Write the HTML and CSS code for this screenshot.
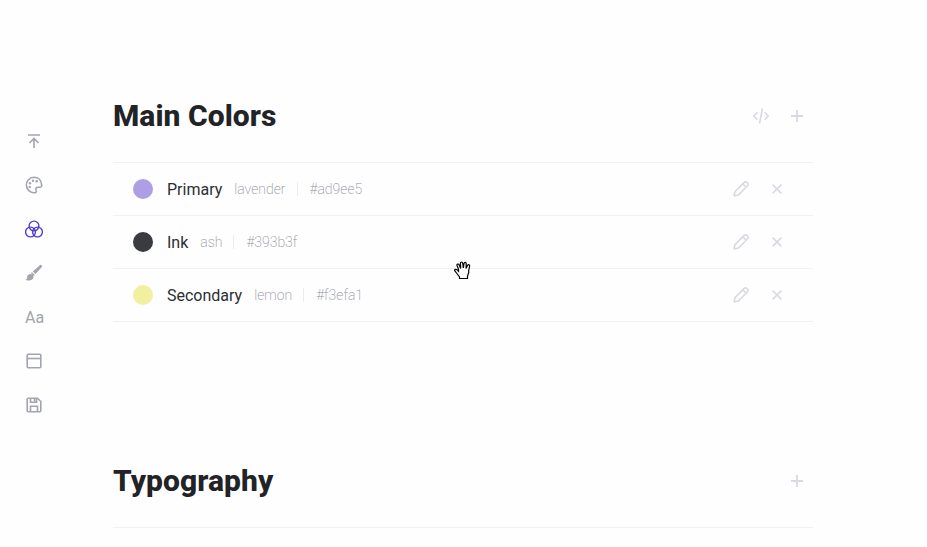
FILE: index.html
```
<!DOCTYPE html>
<html lang="en">
<head>
<meta charset="utf-8">
<title>Style guide</title>
<link rel="stylesheet" href="styles.css">
</head>
<body>
<svg class="defs" aria-hidden="true">
  <symbol id="code" viewBox="0 0 18 18"><path d="M5.400 5.200 1.800 9l3.600 3.800M12.600 5.200 16.200 9l-3.600 3.800M10.500 1.500 7.500 16.500"/></symbol>
  <symbol id="plus" viewBox="0 0 18 18"><path d="M9 3v12M3 9h12"/></symbol>
  <symbol id="close" viewBox="0 0 18 18"><path d="m4.600 4.600 8.800 8.800M13.400 4.600l-8.800 8.800"/></symbol>
  <symbol id="pencil" viewBox="0 0 18 18"><path d="M2 16 3 11.600 12.200 2.400a1.900 1.900 0 0 1 2.700 0l.7.7a1.900 1.900 0 0 1 0 2.700L6.400 15 2 16M10.800 3.900l3.300 3.300"/></symbol>
</svg>
<div class="page">
  <nav class="rail">
    <a><svg class="icon" viewBox="0 0 18 18"><path d="M3 3h12M9 16V6.500M4.500 11 9 6.500l4.500 4.500"/></svg></a>
    <a><svg class="icon" viewBox="0 0 18 18"><path d="M9 1.300a7.700 7.700 0 1 0 1.300 15.300c1.300-.3 1.300-1.500.8-2.300-.9-1.600.1-3 1.900-3h1.600c1.400 0 2.200-.8 2.100-2.200C16.400 4.400 13.200 1.300 9 1.300z"/><g class="dots"><circle cx="4.700" cy="10.900" r="1.200"/><circle cx="5" cy="7.200" r="1.200"/><circle cx="8" cy="4.800" r="1.200"/><circle cx="11.700" cy="5.200" r="1.200"/></g></svg></a>
    <a class="active"><svg class="icon" viewBox="0 0 18 18"><circle cx="9" cy="6" r="4.900"/><circle cx="5.500" cy="12" r="4.900"/><circle cx="12.500" cy="12" r="4.900"/></svg></a>
    <a><svg class="icon solid" viewBox="0 0 18 18"><path d="M15.100.9c.6-.6 2.500 1 2 1.800L10.500 10 7.800 7.600zM7 8.300l2.800 2.600-.9 1L6 9.200zM5.300 10c1.800 0 3.200 1.300 3.200 3 0 3.200-4.600 4.600-7.900 2.700 1.600-.3 1.300-1.300 1.500-2.700.2-1.800 1.500-3 3.200-3z"/></svg></a>
    <a class="type">Aa</a>
    <a><svg class="icon" viewBox="0 0 18 18"><rect x="2.200" y="2.200" width="13.600" height="13.600" rx="1"/><path d="M2.200 6.500h13.600"/></svg></a>
    <a><svg class="icon" viewBox="0 0 18 18"><path d="M3.200 2.200h9.300l3.300 3.300v9.300a1 1 0 0 1-1 1H3.200a1 1 0 0 1-1-1V3.200a1 1 0 0 1 1-1zM5.500 2.500v3.700h6V2.500M5.500 15.500v-5.300h7v5.300M9.500 3v2.200"/></svg></a>
  </nav>
  <main>
    <section class="colors">
      <header><h2>Main Colors</h2><div class="actions"><svg class="icon"><use href="#code"/></svg><svg class="icon thick"><use href="#plus"/></svg></div></header>
      <ul>
        <li><i class="swatch lavender"></i><b>Primary</b><span>lavender</span><span class="hex">#ad9ee5</span><div class="actions"><svg class="icon"><use href="#pencil"/></svg><svg class="icon"><use href="#close"/></svg></div></li>
        <li><i class="swatch ash"></i><b>Ink</b><span>ash</span><span class="hex">#393b3f</span><div class="actions"><svg class="icon"><use href="#pencil"/></svg><svg class="icon"><use href="#close"/></svg></div></li>
        <li><i class="swatch lemon"></i><b>Secondary</b><span>lemon</span><span class="hex">#f3efa1</span><div class="actions"><svg class="icon"><use href="#pencil"/></svg><svg class="icon"><use href="#close"/></svg></div></li>
      </ul>
    </section>
    <section>
      <header><h2>Typography</h2><div class="actions"><svg class="icon thick"><use href="#plus"/></svg></div></header>
      <ul></ul>
    </section>
  </main>
</div>
<svg class="hand" viewBox="0 0 18 19"><path d="M5.500 17.500V16L2.500 12 .7 9.700C.2 8.500 2 7.800 3 8.700l1.500 1.500V8L3 4.500C2.600 3 4.400 2.400 5.100 3.800L6.700 7.500 6.400 2.300C6.400.6 8.500.6 8.700 2.200L9.300 7l.7-4.500c.2-1.600 2.300-1.400 2.200.2L12 7.500l1.500-3c.7-1.400 2.400-.7 2.100.8l-.9 3.900v2.500l-1.200 3.300v2.500z"/></svg>
</body>
</html>
```
FILE: styles.css
```
* { box-sizing: border-box; }
body {
  margin: 0;
  height: 547px;
  overflow: hidden;
  background: #fefefe;
  color: #212326;
  font-family: Roboto, "Liberation Sans", sans-serif;
}
.defs { position: absolute; width: 0; height: 0; }
.page { display: flex; }
.rail {
  display: flex;
  flex-direction: column;
  gap: 26px;
  width: 113px;
  padding: 132px 0 0 25px;
  color: #a2a5ad;
}
.rail a { display: flex; width: 18px; height: 18px; }
.rail .active { color: #5140c8; }
.rail .active .icon { stroke-width: 1.4; }
.rail .type {
  align-items: center;
  padding-top: 2px;
  font-size: 16px;
  line-height: 18px;
}
.icon {
  display: block;
  width: 18px;
  height: 18px;
  fill: none;
  stroke: currentColor;
  stroke-width: 1.6;
}
.thick { stroke-width: 1.8; }
.solid, .dots { fill: currentColor; stroke: none; }
main { width: 700px; padding-top: 69px; }
.colors { height: 365px; }
header {
  display: flex;
  align-items: center;
  justify-content: space-between;
  height: 93px;
  padding-right: 7px;
}
h2 {
  margin: 0;
  font-size: 30px;
  font-weight: 800;
  line-height: 36px;
  letter-spacing: 0.06px;
}
ul {
  margin: 0;
  padding: 0;
  border-top: 1px solid #f1f1f2;
  list-style: none;
}
li {
  display: flex;
  align-items: center;
  height: 53px;
  padding: 0 27px 0 20px;
  border-bottom: 1px solid #f1f1f2;
}
.swatch { width: 20px; height: 20px; margin-right: 14px; border-radius: 50%; }
.lavender { background: #ad9ee5; }
.ash { background: #393b3f; }
.lemon { background: #f3efa1; }
b {
  margin-right: 12px;
  padding-top: 2px;
  color: #2c2e32;
  font-size: 16px;
  font-weight: 400;
  line-height: 20px;
}
span { color: #8f929b; font-size: 14px; font-weight: 200; line-height: 14px; }
.hex { margin-left: 11px; padding-left: 12px; border-left: 1px solid #ececee; }
.actions { display: flex; gap: 18px; margin-left: auto; color: #d9dae1; }
.hand {
  position: absolute;
  left: 454px;
  top: 261px;
  width: 18px;
  height: 19px;
  fill: #fff;
  stroke: #000;
  stroke-width: 1.2;
}
```
